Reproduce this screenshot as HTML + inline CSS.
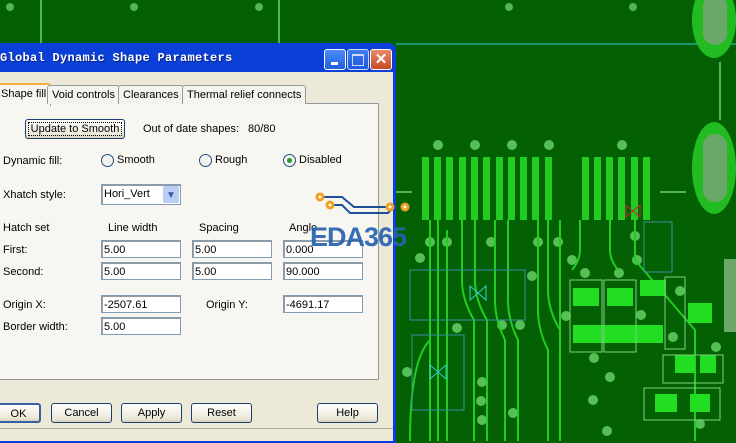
<!DOCTYPE html><html><head><style>
body{margin:0;width:736px;height:441px;overflow:hidden;background:#036003;font-family:"Liberation Sans",sans-serif;font-size:11px;position:relative}
.a{position:absolute}
.dlg{left:-4px;top:43px;width:400px;height:400px;background:#0a3fd8;border-radius:7px 7px 0 0}
.body{left:0;top:72px;width:393px;height:369px;background:#ece9d8}
.title{left:0;top:51px;color:#fff;font:bold 12px "Liberation Mono",monospace;letter-spacing:0.3px;text-shadow:1px 1px #0a2480}
.tb{width:20px;height:19px;border:1px solid #fff;border-radius:3px;background:linear-gradient(#4d8cf6,#1f5fe0);top:49px}
.tab{top:85px;height:18px;border:1px solid #919b9c;border-bottom:none;background:#f4f3ee;line-height:18px;padding:0 4px;border-radius:3px 3px 0 0}
.panel{left:-2px;top:103px;width:379px;height:275px;border:1px solid #919b9c;background:#f7f6f1}
.inp{height:18px;border:1px solid #7f9db9;background:#fff;line-height:18px;padding-left:2px;box-sizing:border-box;box-shadow:inset 1px 1px #999}
.btn{height:20px;border:1px solid #1c3f6e;border-radius:3px;background:linear-gradient(#fff,#ece9d8 80%,#d6d0c0);text-align:center;line-height:19px;box-sizing:border-box}
.rad{width:11px;height:11px;border:1px solid #1c5180;border-radius:50%;background:#f2f2ee}
</style></head><body>
<svg class="a" style="left:0;top:0" width="736" height="441">
<g fill="#55b455"><circle cx="10" cy="7" r="4"/><circle cx="134" cy="7" r="4"/><circle cx="259" cy="7" r="4"/><circle cx="509" cy="7" r="4"/><circle cx="633" cy="7" r="4"/></g>
<g stroke="#55b455" stroke-width="2"><line x1="41" y1="0" x2="41" y2="45"/><line x1="279" y1="0" x2="279" y2="45"/><line x1="720" y1="62" x2="720" y2="120"/></g>
<line x1="396" y1="44" x2="736" y2="44" stroke="#3cc" stroke-width="1"/>
<ellipse cx="714" cy="20" rx="22" ry="38" fill="#22bb22"/><rect x="703" y="-5" width="24" height="50" rx="12" fill="#6aa86a"/>
<ellipse cx="714" cy="168" rx="22" ry="46" fill="#22bb22"/><rect x="703" y="134" width="24" height="68" rx="12" fill="#6aa86a"/>
<g stroke="#55b455" stroke-width="2"><line x1="396" y1="192" x2="412" y2="192"/><line x1="660" y1="192" x2="686" y2="192"/></g>
<g fill="#22cc22">
<rect x="422" y="157" width="7" height="63"/><rect x="434" y="157" width="7" height="63"/><rect x="446" y="157" width="7" height="63"/><rect x="459" y="157" width="7" height="63"/><rect x="471" y="157" width="7" height="63"/><rect x="483" y="157" width="7" height="63"/><rect x="496" y="157" width="7" height="63"/><rect x="508" y="157" width="7" height="63"/><rect x="520" y="157" width="7" height="63"/><rect x="532" y="157" width="7" height="63"/><rect x="545" y="157" width="7" height="63"/><rect x="582" y="157" width="7" height="63"/><rect x="594" y="157" width="7" height="63"/><rect x="606" y="157" width="7" height="63"/><rect x="618" y="157" width="7" height="63"/><rect x="631" y="157" width="7" height="63"/><rect x="643" y="157" width="7" height="63"/>
</g>
<g fill="#55c055"><circle cx="438" cy="145" r="5"/><circle cx="475" cy="145" r="5"/><circle cx="512" cy="145" r="5"/><circle cx="549" cy="145" r="5"/><circle cx="622" cy="145" r="5"/><circle cx="430" cy="242" r="5"/><circle cx="447" cy="242" r="5"/><circle cx="491" cy="242" r="5"/><circle cx="538" cy="242" r="5"/><circle cx="558" cy="242" r="5"/><circle cx="635" cy="236" r="5"/><circle cx="420" cy="258" r="5"/><circle cx="572" cy="260" r="5"/><circle cx="637" cy="260" r="5"/><circle cx="585" cy="273" r="5"/><circle cx="619" cy="273" r="5"/><circle cx="532" cy="276" r="5"/><circle cx="566" cy="316" r="5"/><circle cx="641" cy="315" r="5"/><circle cx="457" cy="328" r="5"/><circle cx="502" cy="325" r="5"/><circle cx="520" cy="325" r="5"/><circle cx="680" cy="291" r="5"/><circle cx="673" cy="337" r="5"/><circle cx="716" cy="347" r="5"/><circle cx="407" cy="372" r="5"/><circle cx="482" cy="382" r="5"/><circle cx="481" cy="401" r="5"/><circle cx="513" cy="413" r="5"/><circle cx="594" cy="358" r="5"/><circle cx="593" cy="400" r="5"/><circle cx="610" cy="377" r="5"/><circle cx="482" cy="420" r="5"/><circle cx="607" cy="431" r="5"/><circle cx="700" cy="424" r="5"/></g>
<g stroke="#22cc22" stroke-width="2" fill="none">
<path d="M430 220 v221 M438 220 v221 M447 230 v211 M462 220 v60 q0 20 12 40 v121 M475 220 v60 q0 20 12 40 v121 M495 220 v80 q0 20 10 40 v101 M508 220 v80 q0 20 10 40 v101 M538 220 v90 q0 20 10 40 v91 M548 220 v70 q0 20 12 40 v111 M560 220 v200 M580 220 v30 q0 10 -8 20 M610 220 v30 q0 10 8 20 M635 220 v40 l60 70 v111 M430 340 q-20 20 -20 101"/>
</g>
<g fill="#22dd22"><rect x="573" y="288" width="26" height="18"/><rect x="607" y="288" width="26" height="18"/><rect x="640" y="280" width="26" height="16"/><rect x="573" y="325" width="90" height="18"/><rect x="688" y="303" width="24" height="20"/><rect x="675" y="355" width="20" height="18"/><rect x="700" y="355" width="16" height="18"/><rect x="655" y="394" width="22" height="18"/><rect x="690" y="394" width="20" height="18"/></g>
<g stroke="#7cd07c" fill="none"><rect x="570" y="280" width="32" height="72"/><rect x="604" y="280" width="32" height="72"/><rect x="665" y="277" width="20" height="72"/><rect x="663" y="355" width="60" height="28"/><rect x="644" y="388" width="76" height="32"/></g>
<rect x="724" y="259" width="12" height="73" fill="#6aa86a"/>
<g stroke="#3a90a0" fill="none"><rect x="410" y="270" width="115" height="50"/><rect x="412" y="335" width="52" height="75"/><rect x="644" y="222" width="28" height="50"/></g>
<g stroke="#3cc" fill="none"><path d="M470 286 l16 14 v-14 l-16 14 z M430 365 l16 14 v-14 l-16 14 z"/></g>
<path d="M626 205 l14 12 v-12 l-14 12 z" stroke="#b33" fill="none"/>
</svg>
<div class="a dlg"></div>
<div class="a body"></div>
<div class="a title">Global Dynamic Shape Parameters</div>
<div class="a tb" style="left:324px"><div class="a" style="left:6px;top:12px;width:7px;height:3px;background:#fff"></div></div>
<div class="a tb" style="left:347px;opacity:.8"><div class="a" style="left:4px;top:4px;width:10px;height:9px;border:1px solid #fff;border-top-width:2px"></div></div>
<div class="a tb" style="left:370px;background:linear-gradient(#e88a6c,#c84a25);color:#fff;font:bold 15px sans-serif;text-align:center;line-height:19px">✕</div>
<div class="a panel"></div>
<div class="a tab" style="left:-4px;top:83px;height:21px;background:#f7f6f1;border-top:2px solid #f0b040">Shape fill</div>
<div class="a tab" style="left:47px">Void controls</div>
<div class="a tab" style="left:118px">Clearances</div>
<div class="a tab" style="left:182px">Thermal relief connects</div>
<div class="a btn" style="left:25px;top:119px;width:100px;outline:1px dotted #000;outline-offset:-4px">Update to Smooth</div>
<div class="a" style="left:143px;top:123px">Out of date shapes:</div><div class="a" style="left:248px;top:123px">80/80</div>
<div class="a" style="left:3px;top:155px">Dynamic fill:</div>
<div class="a rad" style="left:101px;top:154px"></div><div class="a" style="left:117px;top:154px">Smooth</div>
<div class="a rad" style="left:199px;top:154px"></div><div class="a" style="left:215px;top:154px">Rough</div>
<div class="a rad" style="left:283px;top:154px"><div class="a" style="left:3px;top:3px;width:5px;height:5px;border-radius:50%;background:#2a9a2a"></div></div><div class="a" style="left:299px;top:154px">Disabled</div>
<div class="a" style="left:3px;top:189px">Xhatch style:</div>
<div class="a inp" style="left:101px;top:184px;width:80px;height:21px;line-height:19px">Hori_Vert<div class="a" style="right:1px;top:1px;width:16px;height:17px;background:#b9cdf5;border-radius:2px;color:#3c58a0;text-align:center;font-size:10px">▼</div></div>
<div class="a" style="left:3px;top:222px">Hatch set</div><div class="a" style="left:108px;top:222px">Line width</div><div class="a" style="left:199px;top:222px">Spacing</div><div class="a" style="left:289px;top:222px">Angle</div>
<div class="a" style="left:3px;top:244px">First:</div><div class="a" style="left:3px;top:266px">Second:</div>
<div class="a inp" style="left:101px;top:240px;width:80px">5.00</div><div class="a inp" style="left:192px;top:240px;width:80px">5.00</div><div class="a inp" style="left:283px;top:240px;width:80px">0.000</div>
<div class="a inp" style="left:101px;top:262px;width:80px">5.00</div><div class="a inp" style="left:192px;top:262px;width:80px">5.00</div><div class="a inp" style="left:283px;top:262px;width:80px">90.000</div>
<div class="a" style="left:3px;top:299px">Origin X:</div><div class="a inp" style="left:101px;top:295px;width:80px">-2507.61</div>
<div class="a" style="left:206px;top:299px">Origin Y:</div><div class="a inp" style="left:283px;top:295px;width:80px">-4691.17</div>
<div class="a" style="left:3px;top:321px">Border width:</div><div class="a inp" style="left:101px;top:317px;width:80px">5.00</div>
<svg class="a" style="left:300px;top:185px" width="120" height="35">
<g stroke="#1d4f9a" stroke-width="2" fill="none"><path d="M20 12 h22 l12 10 h36 M30 20 h12 l8 8 h38 l6 -6"/></g>
<g fill="#fff" stroke="#f0a020" stroke-width="3"><circle cx="20" cy="12" r="3"/><circle cx="30" cy="20" r="3"/><circle cx="90" cy="22" r="3"/><circle cx="105" cy="22" r="3"/></g>
</svg>
<div class="a" style="left:310px;top:222px;color:#2563b0;font-size:27px;font-weight:bold;letter-spacing:-1px;opacity:.92">EDA365</div>
<div class="a btn" style="left:-4px;top:403px;width:45px;border-width:2px;border-color:#3a5fa0">OK</div>
<div class="a btn" style="left:51px;top:403px;width:61px">Cancel</div>
<div class="a btn" style="left:121px;top:403px;width:61px">Apply</div>
<div class="a btn" style="left:191px;top:403px;width:61px">Reset</div>
<div class="a btn" style="left:317px;top:403px;width:61px">Help</div>
<div class="a" style="left:0;top:428px;width:393px;height:1px;background:#aca899"></div>
</body></html>
